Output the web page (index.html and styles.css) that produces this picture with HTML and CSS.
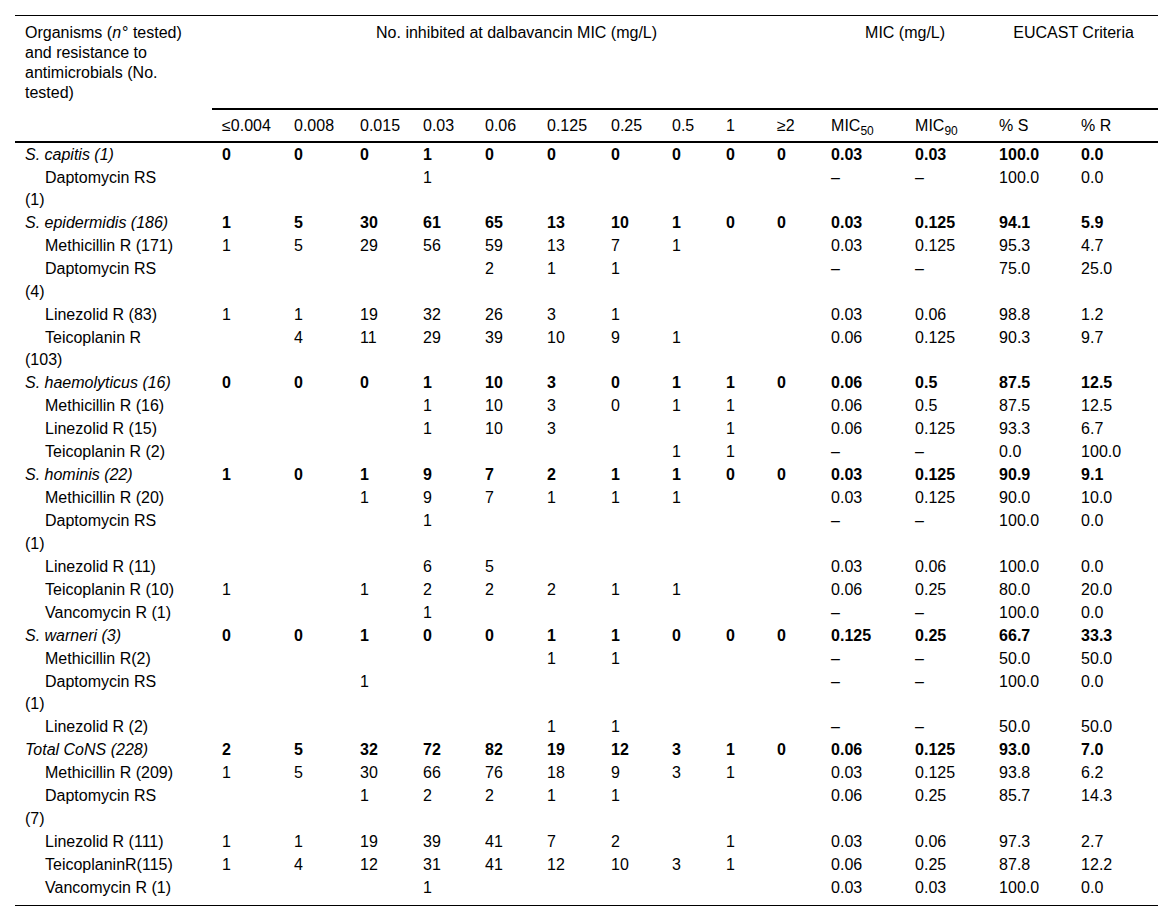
FILE: index.html
```html
<!DOCTYPE html>
<html lang="en">
<head>
<meta charset="utf-8">
<title>Dalbavancin MIC distribution for CoNS</title>
<link rel="stylesheet" href="styles.css">
</head>
<body>
<table class="mic-table">
  <colgroup>
    <col class="w-org">
    <col class="w-c1"><col class="w-c2"><col class="w-c3"><col class="w-c4"><col class="w-c5">
    <col class="w-c6"><col class="w-c7"><col class="w-c8"><col class="w-c9"><col class="w-c10">
    <col class="w-mic50"><col class="w-mic90"><col class="w-s"><col class="w-r">
  </colgroup>
  <thead>
    <tr class="head-top">
      <th rowspan="2" class="org-head"><span class="head-line">Organisms (<i class="var-n">n</i>° tested)</span><br>and resistance to antimicrobials (No. tested)</th>
      <th colspan="10" class="group">No. inhibited at dalbavancin MIC (mg/L)</th>
      <th colspan="2" class="group">MIC (mg/L)</th>
      <th colspan="2" class="group">EUCAST Criteria</th>
    </tr>
    <tr class="head-sub">
      <th>≤0.004</th><th>0.008</th><th>0.015</th><th>0.03</th><th>0.06</th>
      <th>0.125</th><th>0.25</th><th>0.5</th><th>1</th><th>≥2</th>
      <th>MIC<sub>50</sub></th><th>MIC<sub>90</sub></th><th>% S</th><th>% R</th>
    </tr>
  </thead>
  <tbody>
    <tr class="org"><td class="name">S. capitis (1)</td><td>0</td><td>0</td><td>0</td><td>1</td><td>0</td><td>0</td><td>0</td><td>0</td><td>0</td><td>0</td><td>0.03</td><td>0.03</td><td>100.0</td><td>0.0</td></tr>
    <tr class="res"><td class="name">Daptomycin RS<br>(1)</td><td></td><td></td><td></td><td>1</td><td></td><td></td><td></td><td></td><td></td><td></td><td>–</td><td>–</td><td>100.0</td><td>0.0</td></tr>

    <tr class="org"><td class="name">S. epidermidis (186)</td><td>1</td><td>5</td><td>30</td><td>61</td><td>65</td><td>13</td><td>10</td><td>1</td><td>0</td><td>0</td><td>0.03</td><td>0.125</td><td>94.1</td><td>5.9</td></tr>
    <tr class="res"><td class="name">Methicillin R (171)</td><td>1</td><td>5</td><td>29</td><td>56</td><td>59</td><td>13</td><td>7</td><td>1</td><td></td><td></td><td>0.03</td><td>0.125</td><td>95.3</td><td>4.7</td></tr>
    <tr class="res"><td class="name">Daptomycin RS<br>(4)</td><td></td><td></td><td></td><td></td><td>2</td><td>1</td><td>1</td><td></td><td></td><td></td><td>–</td><td>–</td><td>75.0</td><td>25.0</td></tr>
    <tr class="res"><td class="name">Linezolid R (83)</td><td>1</td><td>1</td><td>19</td><td>32</td><td>26</td><td>3</td><td>1</td><td></td><td></td><td></td><td>0.03</td><td>0.06</td><td>98.8</td><td>1.2</td></tr>
    <tr class="res"><td class="name">Teicoplanin R<br>(103)</td><td></td><td>4</td><td>11</td><td>29</td><td>39</td><td>10</td><td>9</td><td>1</td><td></td><td></td><td>0.06</td><td>0.125</td><td>90.3</td><td>9.7</td></tr>

    <tr class="org"><td class="name">S. haemolyticus (16)</td><td>0</td><td>0</td><td>0</td><td>1</td><td>10</td><td>3</td><td>0</td><td>1</td><td>1</td><td>0</td><td>0.06</td><td>0.5</td><td>87.5</td><td>12.5</td></tr>
    <tr class="res"><td class="name">Methicillin R (16)</td><td></td><td></td><td></td><td>1</td><td>10</td><td>3</td><td>0</td><td>1</td><td>1</td><td></td><td>0.06</td><td>0.5</td><td>87.5</td><td>12.5</td></tr>
    <tr class="res"><td class="name">Linezolid R (15)</td><td></td><td></td><td></td><td>1</td><td>10</td><td>3</td><td></td><td></td><td>1</td><td></td><td>0.06</td><td>0.125</td><td>93.3</td><td>6.7</td></tr>
    <tr class="res"><td class="name">Teicoplanin R (2)</td><td></td><td></td><td></td><td></td><td></td><td></td><td></td><td>1</td><td>1</td><td></td><td>–</td><td>–</td><td>0.0</td><td>100.0</td></tr>

    <tr class="org"><td class="name">S. hominis (22)</td><td>1</td><td>0</td><td>1</td><td>9</td><td>7</td><td>2</td><td>1</td><td>1</td><td>0</td><td>0</td><td>0.03</td><td>0.125</td><td>90.9</td><td>9.1</td></tr>
    <tr class="res"><td class="name">Methicillin R (20)</td><td></td><td></td><td>1</td><td>9</td><td>7</td><td>1</td><td>1</td><td>1</td><td></td><td></td><td>0.03</td><td>0.125</td><td>90.0</td><td>10.0</td></tr>
    <tr class="res"><td class="name">Daptomycin RS<br>(1)</td><td></td><td></td><td></td><td>1</td><td></td><td></td><td></td><td></td><td></td><td></td><td>–</td><td>–</td><td>100.0</td><td>0.0</td></tr>
    <tr class="res"><td class="name">Linezolid R (11)</td><td></td><td></td><td></td><td>6</td><td>5</td><td></td><td></td><td></td><td></td><td></td><td>0.03</td><td>0.06</td><td>100.0</td><td>0.0</td></tr>
    <tr class="res"><td class="name">Teicoplanin R (10)</td><td>1</td><td></td><td>1</td><td>2</td><td>2</td><td>2</td><td>1</td><td>1</td><td></td><td></td><td>0.06</td><td>0.25</td><td>80.0</td><td>20.0</td></tr>
    <tr class="res"><td class="name">Vancomycin R (1)</td><td></td><td></td><td></td><td>1</td><td></td><td></td><td></td><td></td><td></td><td></td><td>–</td><td>–</td><td>100.0</td><td>0.0</td></tr>

    <tr class="org"><td class="name">S. warneri (3)</td><td>0</td><td>0</td><td>1</td><td>0</td><td>0</td><td>1</td><td>1</td><td>0</td><td>0</td><td>0</td><td>0.125</td><td>0.25</td><td>66.7</td><td>33.3</td></tr>
    <tr class="res"><td class="name">Methicillin R(2)</td><td></td><td></td><td></td><td></td><td></td><td>1</td><td>1</td><td></td><td></td><td></td><td>–</td><td>–</td><td>50.0</td><td>50.0</td></tr>
    <tr class="res"><td class="name">Daptomycin RS<br>(1)</td><td></td><td></td><td>1</td><td></td><td></td><td></td><td></td><td></td><td></td><td></td><td>–</td><td>–</td><td>100.0</td><td>0.0</td></tr>
    <tr class="res"><td class="name">Linezolid R (2)</td><td></td><td></td><td></td><td></td><td></td><td>1</td><td>1</td><td></td><td></td><td></td><td>–</td><td>–</td><td>50.0</td><td>50.0</td></tr>

    <tr class="org"><td class="name">Total CoNS (228)</td><td>2</td><td>5</td><td>32</td><td>72</td><td>82</td><td>19</td><td>12</td><td>3</td><td>1</td><td>0</td><td>0.06</td><td>0.125</td><td>93.0</td><td>7.0</td></tr>
    <tr class="res"><td class="name">Methicillin R (209)</td><td>1</td><td>5</td><td>30</td><td>66</td><td>76</td><td>18</td><td>9</td><td>3</td><td>1</td><td></td><td>0.03</td><td>0.125</td><td>93.8</td><td>6.2</td></tr>
    <tr class="res"><td class="name">Daptomycin RS<br>(7)</td><td></td><td></td><td>1</td><td>2</td><td>2</td><td>1</td><td>1</td><td></td><td></td><td></td><td>0.06</td><td>0.25</td><td>85.7</td><td>14.3</td></tr>
    <tr class="res"><td class="name">Linezolid R (111)</td><td>1</td><td>1</td><td>19</td><td>39</td><td>41</td><td>7</td><td>2</td><td></td><td>1</td><td></td><td>0.03</td><td>0.06</td><td>97.3</td><td>2.7</td></tr>
    <tr class="res"><td class="name">TeicoplaninR(115)</td><td>1</td><td>4</td><td>12</td><td>31</td><td>41</td><td>12</td><td>10</td><td>3</td><td>1</td><td></td><td>0.06</td><td>0.25</td><td>87.8</td><td>12.2</td></tr>
    <tr class="res last"><td class="name">Vancomycin R (1)</td><td></td><td></td><td></td><td>1</td><td></td><td></td><td></td><td></td><td></td><td></td><td>0.03</td><td>0.03</td><td>100.0</td><td>0.0</td></tr>
  </tbody>
</table>
</body>
</html>
```

FILE: styles.css
```css
html, body {
  margin: 0;
  background: #fff;
}

body {
  padding: 15px 0 0 15px;
  overflow: hidden;
  font-family: "Liberation Sans", Arial, Helvetica, sans-serif;
  font-size: 16px;
  color: #000;
}

.mic-table {
  width: 1143px;
  table-layout: fixed;
  border-collapse: separate;
  border-spacing: 0;
  border-top: 1px solid #000;
  border-bottom: 1px solid #000;
}

.w-org { width: 197px; }
.w-c1 { width: 72px; }
.w-c2 { width: 66px; }
.w-c3 { width: 63px; }
.w-c4 { width: 62px; }
.w-c5 { width: 62px; }
.w-c6 { width: 64px; }
.w-c7 { width: 61px; }
.w-c8 { width: 54px; }
.w-c9 { width: 51px; }
.w-c10 { width: 54px; }
.w-mic50 { width: 84px; }
.w-mic90 { width: 84px; }
.w-s { width: 82px; }
.w-r { width: 87px; }

thead th {
  font-weight: 400;
  text-align: left;
  vertical-align: top;
  line-height: 20px;
}

.org-head {
  padding: 7px 10px 38px 10px;
  border-bottom: 2px solid #000;
}

.head-line {
  white-space: nowrap;
}

.var-n {
  padding-right: 1px;
}

.head-top .group {
  text-align: center;
  padding: 7px 0 65px 0;
  border-bottom: 2px solid #000;
  white-space: nowrap;
}

.head-sub th {
  padding: 6px 0 5px 10px;
  border-bottom: 2px solid #000;
  white-space: nowrap;
}

.head-sub sub {
  font-size: 12px;
  line-height: 0;
  vertical-align: -4px;
}

tbody td {
  padding: 0.5px 0 0 10px;
  line-height: 22.5px;
  vertical-align: top;
  text-align: left;
  white-space: nowrap;
}

tr.org td {
  font-weight: 700;
}

tr.org td.name {
  font-weight: 400;
  font-style: italic;
}

tr.res td.name {
  text-indent: 20px;
}

tr.last td {
  padding-bottom: 6px;
}
```
